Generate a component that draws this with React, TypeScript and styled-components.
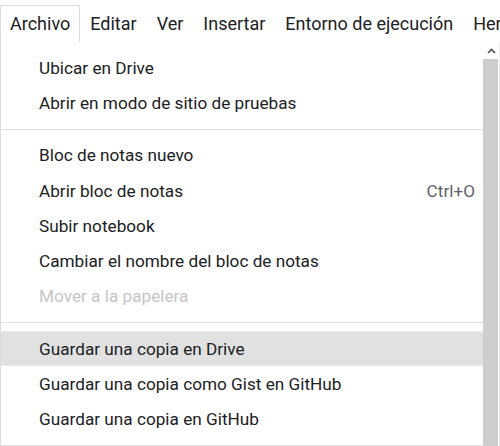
import React from 'react';
import styled, { createGlobalStyle } from 'styled-components';

const GlobalStyle = createGlobalStyle`
  html, body {
    margin: 0;
    padding: 0;
    background: #ffffff;
  }
  body {
    font-family: Roboto, "Noto Sans", Arial, sans-serif;
  }
`;

const Page = styled.div`
  width: 500px;
  height: 446px;
  overflow: hidden;
  background: #ffffff;
`;

const MenuBar = styled.div`
  display: flex;
  align-items: flex-end;
  height: 41px;
  white-space: nowrap;
`;

const TopItem = styled.div<{ active?: boolean }>`
  position: relative;
  z-index: 2;
  height: 35px;
  padding: 0 9px 1px 9px;
  display: flex;
  align-items: center;
  font-size: 18px;
  color: #202124;
  background: #ffffff;
  border: 1px solid ${(p) => (p.active ? '#dadce0' : 'transparent')};
  border-bottom: none;
  margin-bottom: -1px;
  flex-shrink: 0;
`;

const Dropdown = styled.div`
  display: flex;
  height: 405px;
  border-top: 1px solid #dadce0;
  border-left: 1px solid #dadce0;
  border-right: 1px solid #ececec;
`;

const List = styled.div`
  flex: 1;
  padding-top: 8px;
`;

const Item = styled.div<{ disabled?: boolean; highlighted?: boolean }>`
  height: 35.3px;
  box-sizing: border-box;
  display: flex;
  align-items: center;
  justify-content: space-between;
  padding: 0 8px 0 38px;
  font-size: 17.2px;
  color: ${(p) => (p.disabled ? '#c6c6c6' : '#202124')};
  background: ${(p) => (p.highlighted ? '#e1e1e1' : 'transparent')};
  border-top: 1px dotted ${(p) => (p.highlighted ? '#f4f4f4' : 'transparent')};
  border-bottom: 1px dotted ${(p) => (p.highlighted ? '#f4f4f4' : 'transparent')};
  white-space: nowrap;
`;

const Shortcut = styled.span`
  color: #5f6368;
  font-size: 17.2px;
`;

const Separator = styled.div`
  height: 1px;
  margin: 8px 0;
  background: #e0e0e0;
`;

const ScrollBar = styled.div`
  width: 16px;
  display: flex;
  flex-direction: column;
  flex-shrink: 0;
`;

const ScrollButton = styled.div`
  height: 17px;
  display: flex;
  align-items: center;
  justify-content: center;
  background: #ffffff;
`;

const Thumb = styled.div`
  flex: 1;
  background: #cdcdcd;
  margin-right: 1px;
`;

const topItems = ['Archivo', 'Editar', 'Ver', 'Insertar', 'Entorno de ejecución', 'Herramientas'];

type Entry =
  | { kind: 'sep' }
  | { kind: 'item'; label: string; shortcut?: string; disabled?: boolean; highlighted?: boolean };

const entries: Entry[] = [
  { kind: 'item', label: 'Ubicar en Drive' },
  { kind: 'item', label: 'Abrir en modo de sitio de pruebas' },
  { kind: 'sep' },
  { kind: 'item', label: 'Bloc de notas nuevo' },
  { kind: 'item', label: 'Abrir bloc de notas', shortcut: 'Ctrl+O' },
  { kind: 'item', label: 'Subir notebook' },
  { kind: 'item', label: 'Cambiar el nombre del bloc de notas' },
  { kind: 'item', label: 'Mover a la papelera', disabled: true },
  { kind: 'sep' },
  { kind: 'item', label: 'Guardar una copia en Drive', highlighted: true },
  { kind: 'item', label: 'Guardar una copia como Gist en GitHub' },
  { kind: 'item', label: 'Guardar una copia en GitHub' },
  { kind: 'sep' },
];

export default function App() {
  return (
    <Page>
      <GlobalStyle />
      <MenuBar>
        {topItems.map((t, i) => (
          <TopItem key={t} active={i === 0}>
            {t}
          </TopItem>
        ))}
      </MenuBar>
      <Dropdown>
        <List>
          {entries.map((e, i) =>
            e.kind === 'sep' ? (
              <Separator key={i} />
            ) : (
              <Item key={i} disabled={e.disabled} highlighted={e.highlighted}>
                <span>{e.label}</span>
                {e.shortcut && <Shortcut>{e.shortcut}</Shortcut>}
              </Item>
            )
          )}
        </List>
        <ScrollBar>
          <ScrollButton>
            <svg width="9" height="6" viewBox="0 0 9 6">
              <path d="M1 5 L4.5 1.5 L8 5" fill="none" stroke="#505050" strokeWidth="1.6" />
            </svg>
          </ScrollButton>
          <Thumb />
        </ScrollBar>
      </Dropdown>
    </Page>
  );
}
